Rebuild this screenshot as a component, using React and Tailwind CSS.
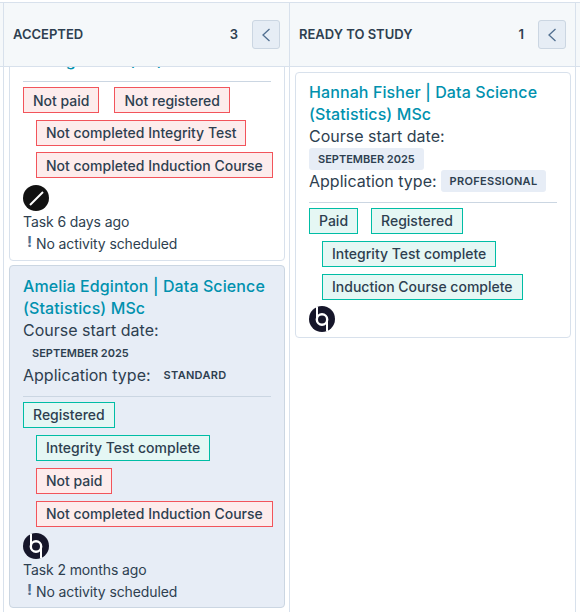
const Tag = ({ kind, indent, children }) => (
  <div className={`${indent ? "ml-[13px]" : ""} w-fit shrink-0 whitespace-nowrap h-[26px] border flex items-center px-[9px] text-[14px] font-medium text-[#2e3f50] ${kind === "ok" ? "bg-[#e5f7f4] border-[#00bda5]" : "bg-[#fdecec] border-[#f2545b]"}`}>
    {children}
  </div>
);

const Logo = ({ slash }) => (
  <svg viewBox="0 0 26 26" className="w-[26px] h-[26px] block">
    <circle cx="13" cy="13" r="13" fill={slash ? "#111" : "#16162a"} />
    {slash ? (
      <path d="M7 20 L20 7" stroke="#fff" strokeWidth="2" />
    ) : (
      <>
        <circle cx="13" cy="13.5" r="5.2" fill="none" stroke="#fff" strokeWidth="2.4" />
        <path d="M8 1 V13 M18 14 V25" stroke="#fff" strokeWidth="2" />
      </>
    )}
  </svg>
);

const HeaderCell = ({ title, count, className }) => (
  <div className={`flex items-center border-l border-[#d8e1ec] ${className}`}>
    <span className="text-[13px] font-semibold text-[#2e3f50]">{title}</span>
    <span className="ml-auto text-[13px] font-semibold text-[#2e3f50]">{count}</span>
    <button className="ml-[14px] w-[28px] h-[29px] rounded-[3px] bg-[#e6edf5] border border-[#cbd6e2] flex items-center justify-center">
      <svg viewBox="0 0 12 16" className="w-[12px] h-[16px]" fill="none" stroke="#516f90" strokeWidth="1.3">
        <path d="M9.5 2 L3 8 L9.5 14" />
      </svg>
    </button>
  </div>
);

const Footer = ({ task }) => (
  <>
    <div className="text-[14px] leading-[22px] tracking-[-0.1px] text-[#2e3f50]">{task}</div>
    <div className="flex items-center text-[14px] leading-[22px] tracking-[-0.1px] text-[#2e3f50]">
      <span className="w-[13px] text-center text-[15px] font-bold text-[#516f90] relative -top-[2px]">!</span>No activity scheduled
    </div>
  </>
);

const Card = ({ name, type, chip, blue, tags, logo, task, className }) => (
  <div className={`border rounded-[4px] px-[13px] ${blue ? "bg-[#e7edf6] border-[#cbd6e2]" : "bg-white border-[#d8e1ec]"} ${className}`}>
    <div className="text-[16px] leading-[22px] font-medium tracking-[0.1px] text-[#0091ae]">{name} | Data Science (Statistics) MSc</div>
    <div className="text-[16px] leading-[22px] text-[#2e3f50]">Course start date:</div>
    <div className={`mt-[1px] w-fit h-[22px] px-[9px] rounded-[3px] flex items-center text-[11px] font-semibold text-[#2e3f50] ${chip ? "bg-[#e7edf6]" : ""}`}>SEPTEMBER 2025</div>
    <div className="flex items-center text-[16px] leading-[22px] text-[#2e3f50]">
      Application type:
      <span className={`ml-[4px] h-[22px] px-[9px] rounded-[3px] flex items-center text-[11px] font-semibold tracking-[0.3px] ${chip ? "bg-[#e7edf6]" : ""}`}>{type}</span>
    </div>
    <div className="mt-[9.5px] mb-[5px] border-t border-[#cbd6e2]" />
    <div className="flex flex-col gap-[7px]">
      {tags}
    </div>
    <div className="mt-[6px]"><Logo slash={logo === "slash"} /></div>
    {task && <Footer task={task} />}
  </div>
);

export default function App() {
  return (
    <div className="w-[580px] h-[612px] overflow-hidden bg-white flex flex-col font-['Inter',sans-serif] pt-[2px]">
      <div className="h-[65px] shrink-0 flex pl-[3px] bg-[#f5f8fa] border-t border-b border-[#d8e1ec]">
        <HeaderCell title="ACCEPTED" count="3" className="w-[286px] pl-[9px] pr-[9px]" />
        <HeaderCell title="READY TO STUDY" count="1" className="w-[287px] pl-[9px] pr-[9px] border-r" />
      </div>
      <div className="flex-1 min-h-0 flex pl-[3px]">
        <div className="w-[286px] border-l border-[#d8e1ec] pl-[5px] pr-[4px] overflow-hidden">
          {/* first card is scrolled up under the header */}
          <div className="-mt-[28px] border border-[#d8e1ec] rounded-[4px] px-[13px] pt-[9px] pb-[5px] bg-white">
            <div className="text-[16px] leading-[22px] font-medium tracking-[0.1px] text-[#0091ae]">Management (BA)</div>
            <div className="mt-[10px] mb-[5px] border-t border-[#cbd6e2]" />
            <div className="flex flex-col gap-[6.5px]">
              <div className="flex gap-[15px]">
                <Tag kind="bad">Not paid</Tag>
                <Tag kind="bad">Not registered</Tag>
              </div>
              <Tag kind="bad" indent>Not completed Integrity Test</Tag>
              <Tag kind="bad" indent>Not completed Induction Course</Tag>
            </div>
            <div className="mt-[7px]"><Logo slash /></div>
            <Footer task="Task 6 days ago" />
          </div>
          <Card
            blue
            name="Amelia Edginton"
            type="STANDARD"
            task="Task 2 months ago"
            className="mt-[4px] pt-[9px] pb-[4px]"
            tags={
              <>
                <Tag kind="ok">Registered</Tag>
                <Tag kind="ok" indent>Integrity Test complete</Tag>
                <Tag kind="bad" indent>Not paid</Tag>
                <Tag kind="bad" indent>Not completed Induction Course</Tag>
              </>
            }
          />
        </div>
        <div className="w-[287px] border-l border-r border-[#d8e1ec] pl-[5px] pr-[4px] pt-[5px]">
          <Card
            chip
            name="Hannah Fisher"
            type="PROFESSIONAL"
            className="pt-[8px] pb-[5px]"
            tags={
              <>
                <div className="flex gap-[13px]">
                  <Tag kind="ok">Paid</Tag>
                  <Tag kind="ok">Registered</Tag>
                </div>
                <Tag kind="ok" indent>Integrity Test complete</Tag>
                <Tag kind="ok" indent>Induction Course complete</Tag>
              </>
            }
          />
        </div>
      </div>
    </div>
  );
}
